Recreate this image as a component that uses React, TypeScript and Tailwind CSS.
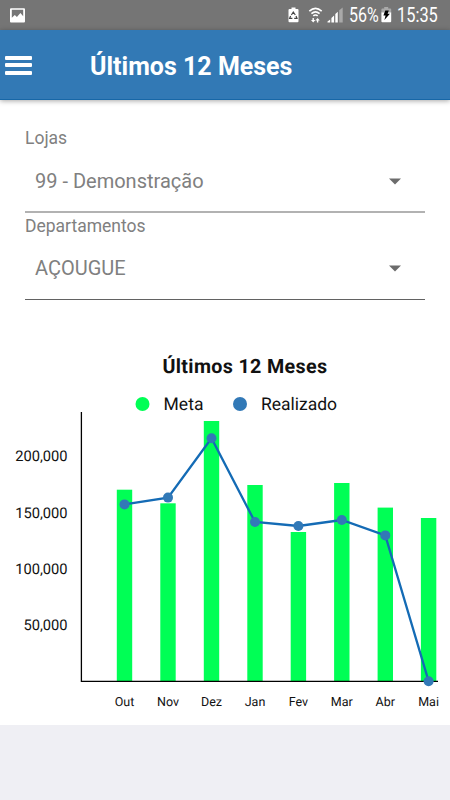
import React from "react";

type Month = { label: string; x: number; top: number; y: number };

const months: Month[] = [
  { label: "Out", x: 124.5, top: 139.7, y: 154.4 },
  { label: "Nov", x: 168, top: 153.3, y: 147.6 },
  { label: "Dez", x: 211.5, top: 71, y: 88.2 },
  { label: "Jan", x: 255, top: 135, y: 172 },
  { label: "Fev", x: 298.4, top: 182, y: 176 },
  { label: "Mar", x: 341.8, top: 133, y: 170 },
  { label: "Abr", x: 385.3, top: 157.6, y: 185.4 },
  { label: "Mai", x: 428.6, top: 168, y: 331.2 },
];

const ticks = [
  { label: "200,000", y: 111.4 },
  { label: "150,000", y: 167.8 },
  { label: "100,000", y: 224 },
  { label: "50,000", y: 280.3 },
];

function StatusBar() {
  return (
    <div className="flex h-[30px] shrink-0 items-center bg-[#757575] text-white">
      <svg className="ml-[10px] shrink-0" width="15" height="15" viewBox="0 0 15 15">
        <path fillRule="evenodd" fill="#fff" d="M1 0.2h13q1 0 1 1v12.2q0 1-1 1H1q-1 0-1-1V1.200q0-1 1-1ZM1.800 1.800v8l3-2.900 2.100 2 3.500-3.800 2.800 3.200V1.800Z" />
      </svg>
      <svg className="ml-auto shrink-0" width="58" height="18" viewBox="286 6 58 18">
        <path fill="#fff" d="M291.500 7.500h4v1.600h2q1 0 1 1v11.200q0 1-1 1h-8q-1 0-1-1V10.100q0-1 1-1h2Z" />
        <path d="m291.400 15 1.900-3 2 3M296 16l1 2.400h-2.800M292.400 18.400h-2.800l1-2.400" fill="none" stroke="#444" strokeWidth="1.200" />
        <g fill="none" stroke="#fff" strokeWidth="1.600">
          <path d="M309.300 11.200q6.200-5.500 12.400 0M311.400 13.600q4.100-3.500 8.200 0M313.300 15.900q2.200-1.700 4.400 0" />
        </g>
        <path fill="#fff" d="M312.500 18h1.400v2h1.500l-2.200 2.500-2.200-2.500h1.500ZM316.900 22.500h1.400v-2h1.500L317.600 18l-2.200 2.500h1.500Z" />
        <path fill="#fff" d="M327.500 22.500v-1l2.700-2v3ZM331.400 22.500v-4.500l2.700-2.500v7ZM335.300 22.500v-8.500l2.500-2.200v10.700Z" />
        <path fill="#a9a9a9" d="M339.200 22.500V10.200l3.500-2.800v15.100Z" />
      </svg>
      <div className="ml-[5px] mt-[2px] h-[22px] w-[30px] origin-left scale-x-[0.82] text-[19.500px] leading-[22px]">56%</div>
      <svg className="ml-[2px] mr-[1px] shrink-0" width="11" height="16" viewBox="0 0 11 16">
        <path fill="#a9a9a9" d="M3.200 0h4v1.600h2q1 0 1 1V6H.4V2.600q0-1 1-1h1.800Z" />
        <path fill="#fff" d="M.4 5.500h9.800v8.700q0 1-1 1H1.400q-1 0-1-1Z" />
        <path fill="#000" d="M4.300 3.500h3.500L6.600 6.700h2.300L3.400 13l1.200-4.600H2.400Z" />
      </svg>
      <div className="ml-[4px] mr-[13px] mt-[2px] h-[22px] w-[40px] origin-left scale-x-[0.84] text-[19.500px] leading-[22px]">15:35</div>
    </div>
  );
}

function SelectField({ label, value, dark }: { label: string; value: string; dark?: boolean }) {
  return (
    <div className={dark ? "h-[87px] border-b border-[#626262]" : "h-[88px] border-b-2 border-[#b2b2b2]"}>
      <div className="pt-[2px] text-[17.500px] leading-[22px] text-[#808080]">{label}</div>
      <div className={dark ? "flex items-center justify-between pl-[10px] pr-[24px] pt-[18px]" : "flex items-center justify-between pl-[10px] pr-[24px] pt-[19px]"}>
        <span className="text-[20px] leading-[26px] text-[#808080]">{value}</span>
        <svg width="12" height="7" viewBox="0 0 12 7">
          <path fill="#6c6c6c" d="M0 .5h12l-6 6Z" />
        </svg>
      </div>
    </div>
  );
}

function Chart() {
  return (
    <svg className="block [text-rendering:geometricPrecision]" width="450" height="375" viewBox="0 0 450 375" fill="#111">
      <text x="162.500" y="23" fontSize="19.700" fontWeight="700" textLength="164.500">Últimos 12 Meses</text>
      <circle cx="142.500" cy="54" r="7" fill="#00ff55" />
      <text x="163.500" y="60.300" fontSize="17.500" textLength="40">Meta</text>
      <circle cx="240" cy="54" r="7" fill="#3279b7" />
      <text x="261" y="60.300" fontSize="17.500" textLength="76">Realizado</text>
      {ticks.map((t) => (
        <text key={t.label} x="67.600" y={t.y} fontSize="14.700" textAnchor="end">{t.label}</text>
      ))}
      {months.map((m) => (
        <rect key={m.label} x={m.x - 7.7} y={m.top} width="15.400" height={331 - m.top} fill="#00ff55" />
      ))}
      <path d="M81.400 62V331.300H438" fill="none" stroke="#000" strokeWidth="1.300" />
      <polyline points={months.map((m) => `${m.x},${m.y}`).join(" ")} fill="none" stroke="#146bb5" strokeWidth="2.300" />
      {months.map((m) => (
        <circle key={m.label} cx={m.x} cy={m.y} r="5" fill="#3279b7" />
      ))}
      {months.map((m) => (
        <text key={m.label} x={m.x} y="355.500" fontSize="12.500" textAnchor="middle">{m.label}</text>
      ))}
    </svg>
  );
}

export default function App() {
  return (
    <div className="flex h-[800px] w-[450px] flex-col overflow-hidden bg-[#efeff4] font-['Roboto',sans-serif]">
      <StatusBar />
      <header className="z-10 flex h-[70px] shrink-0 items-center border-b border-[#1767a7] bg-[#3279b5] shadow-[0_1px_5px_rgba(0,0,0,0.35)]">
        <div className="ml-[5px] mt-[1px] flex w-[27px] flex-col gap-[3.500px]">
          <span className="h-[4px] rounded-[1px] bg-white" />
          <span className="h-[4px] rounded-[1px] bg-white" />
          <span className="h-[4px] rounded-[1px] bg-white" />
        </div>
        <h1 className="ml-[58px] mt-[4px] text-[25px] font-bold leading-[30px] text-white">Últimos 12 Meses</h1>
      </header>
      <main className="h-[625px] shrink-0 bg-white">
        <div className="h-[250px] px-[25px] pt-[25px]">
          <SelectField label="Lojas" value="99 - Demonstração" />
          <SelectField label="Departamentos" value="AÇOUGUE" dark />
        </div>
        <Chart />
      </main>
    </div>
  );
}
